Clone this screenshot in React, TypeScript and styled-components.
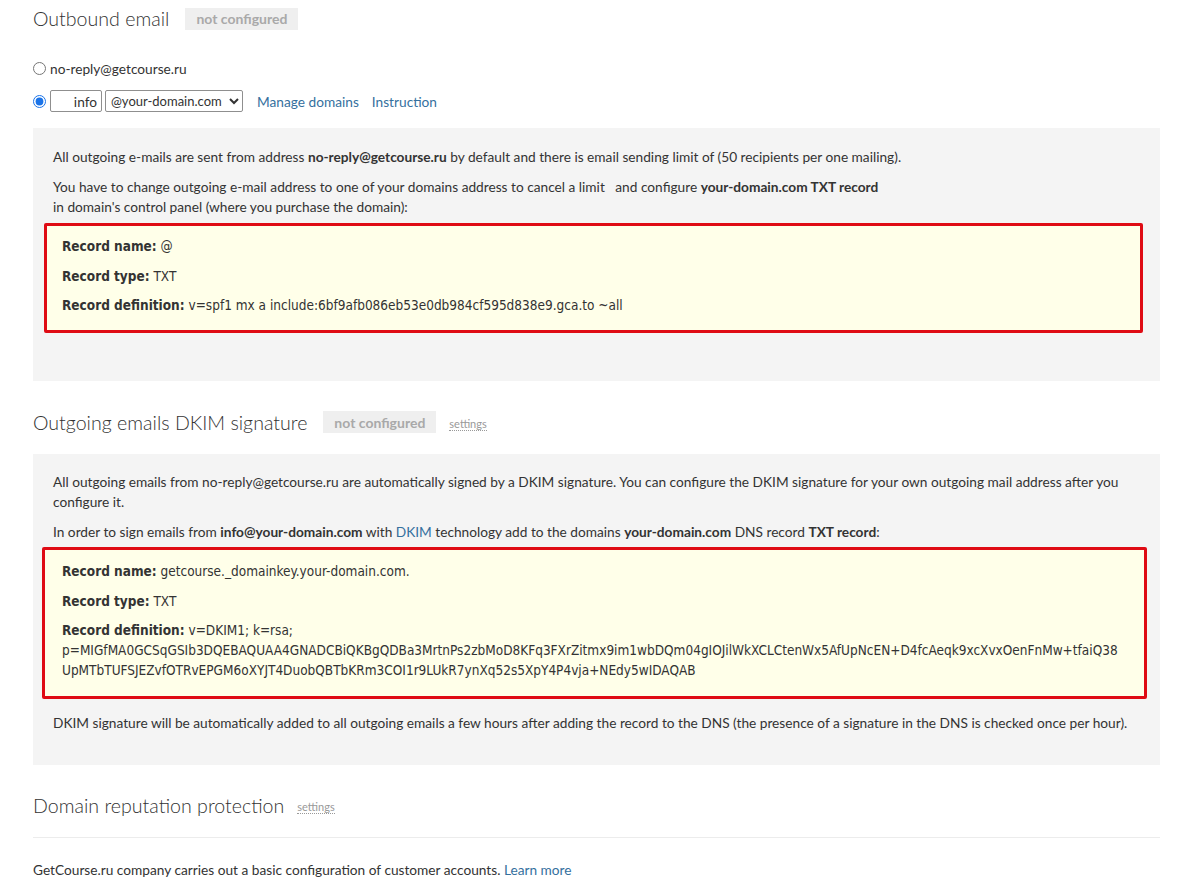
import React from "react";
import styled, { createGlobalStyle } from "styled-components";

const Global = createGlobalStyle`
  html, body { margin: 0; padding: 0; background: #fff; }
  body { font-family: Lato, "Open Sans", Arial, sans-serif; color: #333; }
`;

const Page = styled.div`
  padding: 0 40px 0 33px;
  width: 1127px;
`;

const TitleRow = styled.div<{ $mt: number; $h: number }>`
  display: flex;
  align-items: center;
  margin-top: ${(p) => p.$mt}px;
  height: ${(p) => p.$h}px;
`;

const Title = styled.h2`
  margin: 0;
  font-size: 19.6px;
  font-weight: 300;
  color: #333;
`;

const Badge = styled.span`
  display: inline-flex;
  align-items: center;
  height: 22px;
  padding: 0 11px;
  margin-left: 16px;
  background: #efefef;
  color: #a9a9a9;
  font-weight: 700;
  font-size: 14px;
`;

const SettingsLink = styled.a`
  margin-left: 13px;
  margin-top: 3px;
  font-size: 11px;
  color: #999;
  text-decoration: none;
  border-bottom: 1px dotted #999;
  line-height: 13px;
`;

const RadioRow = styled.label<{ $mt: number }>`
  display: flex;
  align-items: center;
  gap: 3px;
  margin-top: ${(p) => p.$mt}px;
  height: 22px;
  font-size: 13.7px;
  color: #333;
`;

const Radio = styled.input`
  margin: 0 1px 0 0;
  width: 13px;
  height: 13px;
  accent-color: #1a73e8;
`;

const NameInput = styled.input`
  box-sizing: border-box;
  width: 52px;
  height: 22px;
  border: 1px solid #8f8f8f;
  border-radius: 2px;
  text-align: right;
  font: 13.7px Lato, Arial, sans-serif;
  color: #333;
  padding: 0 4px;
`;

const DomainSelect = styled.select`
  box-sizing: border-box;
  width: 138px;
  height: 22px;
  border: 1px solid #8f8f8f;
  border-radius: 2px;
  font: 13px Lato, Arial, sans-serif;
  color: #333;
  background: #fff;
  padding: 0 0 0 1px;
`;

const Link = styled.a<{ $ml?: number }>`
  color: #35709e;
  text-decoration: none;
  margin-left: ${(p) => p.$ml ?? 0}px;
`;

const Panel = styled.div<{ $mt: number; $pt: number; $pb: number }>`
  margin-top: ${(p) => p.$mt}px;
  background: #f4f4f4;
  padding: ${(p) => p.$pt}px 20px ${(p) => p.$pb}px 20px;
  font-size: 13.7px;
  line-height: 20px;
  color: #333;
`;

const Para = styled.p<{ $mb?: number; $mt?: number }>`
  margin: ${(p) => p.$mt ?? 0}px 0 ${(p) => p.$mb ?? 10}px 0;
`;

const RecordBox = styled.div<{ $ml: number; $mr: number; $pt: number; $pb: number }>`
  margin: 0 ${(p) => -p.$mr}px 0 ${(p) => -p.$ml}px;
  background: #ffffe9;
  border: 3px solid #df0b14;
  border-radius: 2px;
  padding: ${(p) => p.$pt}px 15px ${(p) => p.$pb}px ${(p) => 6 + p.$ml}px;
  font-family: "DejaVu Sans Condensed", Tahoma, "DejaVu Sans", sans-serif;
  font-size: 13.5px;
  color: #333;
`;

const RecLine = styled.p`
  margin: 0 0 9.5px 0;
  line-height: 20px;
  &:last-child { margin-bottom: 0; }
  b { font-weight: 700; color: #333; }
`;

const Divider = styled.hr`
  margin: 19px 0 0 0;
  border: 0;
  border-top: 1px solid #ececec;
`;

const Footer = styled.p`
  margin: 22px 0 0 0;
  font-size: 13.7px;
  line-height: 20px;
  color: #333;
`;

export default function App() {
  return (
    <>
      <Global />
      <Page>
        <TitleRow $mt={0} $h={37}>
          <Title>Outbound email</Title>
          <Badge>not configured</Badge>
        </TitleRow>

        <RadioRow $mt={20}>
          <Radio type="radio" name="from" />
          <span>no-reply@getcourse.ru</span>
        </RadioRow>
        <RadioRow $mt={11}>
          <Radio type="radio" name="from" defaultChecked />
          <NameInput defaultValue="info" />
          <DomainSelect defaultValue="d">
            <option value="d">@your-domain.com</option>
          </DomainSelect>
          <Link href="#" $ml={11}>Manage domains</Link>
          <Link href="#" $ml={10}>Instruction</Link>
        </RadioRow>

        <Panel $mt={16} $pt={19} $pb={48}>
          <Para>
            All outgoing e-mails are sent from address <b>no-reply@getcourse.ru</b> by default and there is email
            sending limit of (50 recipients per one mailing).
          </Para>
          <Para $mb={6}>
            You have to change outgoing e-mail address to one of your domains address to cancel a limit &nbsp; and
            configure <b>your-domain.com TXT record</b>
            <br />
            in domain's control panel (where you purchase the domain):
          </Para>
          <RecordBox $ml={9} $mr={3} $pt={10} $pb={15}>
            <RecLine><b>Record name:</b> @</RecLine>
            <RecLine><b>Record type:</b> TXT</RecLine>
            <RecLine>
              <b>Record definition:</b> v=spf1 mx a include:6bf9afb086eb53e0db984cf595d838e9.gca.to ~all
            </RecLine>
          </RecordBox>
        </Panel>

        <TitleRow $mt={28} $h={26}>
          <Title>Outgoing emails DKIM signature</Title>
          <Badge>not configured</Badge>
          <SettingsLink href="#">settings</SettingsLink>
        </TitleRow>

        <Panel $mt={19} $pt={18} $pb={32}>
          <Para>
            All outgoing emails from no-reply@getcourse.ru are automatically signed by a DKIM signature. You can
            configure the DKIM signature for your own outgoing mail address after you configure it.
          </Para>
          <Para $mb={5}>
            In order to sign emails from <b>info@your-domain.com</b> with <Link href="#">DKIM</Link> technology add to
            the domains <b>your-domain.com</b> DNS record <b>TXT record</b>:
          </Para>
          <RecordBox $ml={11} $mr={7} $pt={11} $pb={16}>
            <RecLine><b>Record name:</b> getcourse._domainkey.your-domain.com.</RecLine>
            <RecLine><b>Record type:</b> TXT</RecLine>
            <RecLine>
              <b>Record definition:</b> v=DKIM1; k=rsa;
              <br />
              p=MIGfMA0GCSqGSIb3DQEBAQUAA4GNADCBiQKBgQDBa3MrtnPs2zbMoD8KFq3FXrZitmx9im1wbDQm04gIOJilWkXCLCtenWx5AfUpNcEN+D4fcAeqk9xcXvxOenFnMw+tfaiQ38
              <br />
              UpMTbTUFSJEZvfOTRvEPGM6oXYJT4DuobQBTbKRm3COI1r9LUkR7ynXq52s5XpY4P4vja+NEdy5wIDAQAB
            </RecLine>
          </RecordBox>
          <Para $mb={0} $mt={14}>
            DKIM signature will be automatically added to all outgoing emails a few hours after adding the record to
            the DNS (the presence of a signature in the DNS is checked once per hour).
          </Para>
        </Panel>

        <TitleRow $mt={27} $h={26}>
          <Title>Domain reputation protection</Title>
          <SettingsLink href="#">settings</SettingsLink>
        </TitleRow>
        <Divider />
        <Footer>
          GetCourse.ru company carries out a basic configuration of customer accounts. <Link href="#">Learn more</Link>
        </Footer>
      </Page>
    </>
  );
}
